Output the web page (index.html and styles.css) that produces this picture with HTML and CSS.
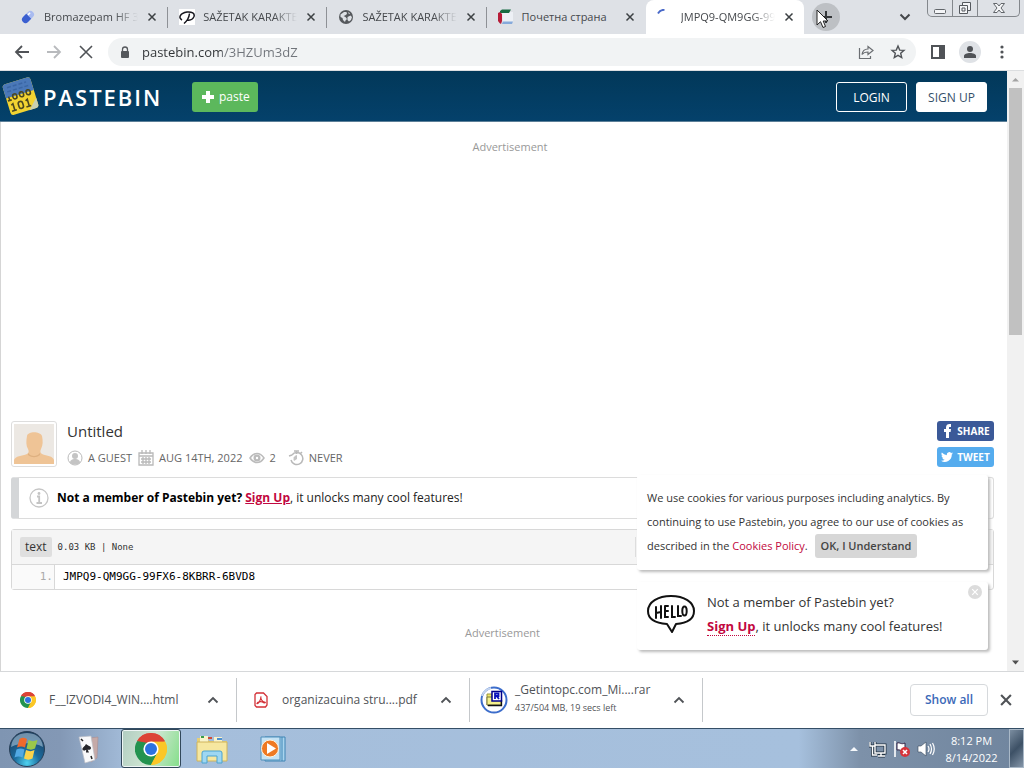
FILE: index.html
```html
<!DOCTYPE html>
<html lang="en">
<head>
<meta charset="utf-8">
<title>JMPQ9-QM9GG - Pastebin.com</title>
<link rel="stylesheet" href="styles.css">
</head>
<body>
<svg class="defs" aria-hidden="true">
  <defs>
    <symbol id="x" viewBox="0 0 10 10"><path d="M1.5 1.5l7 7M8.500 1.5l-7 7" stroke="currentColor" stroke-width="1.500" fill="none"/></symbol>
    <symbol id="up" viewBox="0 0 12 12"><path d="M1.500 8.500L6 4l4.500 4.500" stroke="currentColor" stroke-width="1.800" fill="none"/></symbol>
    <symbol id="chrome" viewBox="0 0 32 32">
      <path d="M16 16L2.140 8A16 16 0 0 1 29.860 8z" fill="#dc4437"/>
      <path d="M16 16L29.860 8A16 16 0 0 1 16 32z" fill="#fbc726"/>
      <path d="M16 16L16 32A16 16 0 0 1 2.140 8z" fill="#23934f"/>
      <path d="M16 8.500h13.860L22.500 19.500z" fill="#fbc726"/>
      <path d="M2.140 8l7.500 12 3-10z" fill="#23934f"/>
      <path d="M22.500 19.800L16 32l-4-9z" fill="#23934f"/>
      <path d="M29.860 8.500H16V16l6.500 3.800L16 32A16 16 0 0 0 29.860 8.500z" fill="#fbc726"/>
      <path d="M2.140 8A16 16 0 0 1 29.860 8.500H16z" fill="#dc4437"/>
      <circle cx="16" cy="16" r="7.600" fill="#fff"/><circle cx="16" cy="16" r="6" fill="#2c72e0"/>
    </symbol>
  </defs>
</svg>

<header class="tabstrip">
  <div class="tabs">
    <div class="tab">
      <svg class="fav" viewBox="0 0 16 16"><g transform="rotate(-45 8 8)"><rect x="1" y="4.500" width="14" height="7" rx="3.500" fill="#a9bbf0"/><path d="M4.500 4.500H9v7H4.500a3.500 3.500 0 0 1 0-7z" fill="#3b5fd0"/><path d="M9.500 6.500h3" stroke="#fff" stroke-width="1.500"/></g></svg>
      <button class="tab-title">Bromazepam HF 3 mg</button>
      <button class="close" aria-label="Close tab"><svg><use href="#x"/></svg></button>
    </div>
    <div class="tab">
      <svg class="fav" viewBox="0 0 16 16"><path fill="#fff" d="M0 0h16v16H0z"/><path d="M3 11C-1 9 1 4 8 3c5-.5 8 1.500 7 4.500C14 10 11 11.500 8 11M10.500 4.500C10 9 8 12 5 14.500" fill="none" stroke="#15151d" stroke-width="1.500"/></svg>
      <button class="tab-title">SAŽETAK KARAKTERISTIKA</button>
      <button class="close" aria-label="Close tab"><svg><use href="#x"/></svg></button>
    </div>
    <div class="tab">
      <svg class="fav" viewBox="0 0 16 16"><circle cx="8" cy="8" r="7" fill="#55585c"/><path d="M2.500 5.500L6 3h2.500l.5 2-2 1.500-1.500.5 2 1 1.500 2-1.500 1.500L7 13l-2-2-.5-2-2-1zM9.500 8l3-1.500L14 8l-1 3-2 1.500L9.500 11zM10 3l2 1.200-1 1z" fill="#dee1e6"/></svg>
      <button class="tab-title">SAŽETAK KARAKTERISTIKA</button>
      <button class="close" aria-label="Close tab"><svg><use href="#x"/></svg></button>
    </div>
    <div class="tab">
      <svg class="fav" viewBox="0 0 16 16"><path d="M4 3h11v10H5z" fill="#edf0f5"/><path d="M2 4V2l2-1.500h9L11 4z" fill="#176b42"/><path d="M0 4l2-1 2 2v7l-1 3-1.500-1L0 12z" fill="#b61c38"/><path d="M5 12.500h10L14 15H4z" fill="#86aadb"/></svg>
      <button class="tab-title">Почетна страна</button>
      <button class="close" aria-label="Close tab"><svg><use href="#x"/></svg></button>
    </div>
    <div class="tab active">
      <svg class="fav" viewBox="0 0 16 16"><path d="M1 4.500C2.500 2 4.500.8 7.500.8" fill="none" stroke="#4868c8" stroke-width="2"/></svg>
      <button class="tab-title">JMPQ9-QM9GG-99FX6</button>
      <button class="close" aria-label="Close tab"><svg><use href="#x"/></svg></button>
    </div>
  </div>
  <button class="newtab" aria-label="New tab">
    <svg viewBox="0 0 28 28"><path d="M14 8v12M8 14h12" stroke="#333639" stroke-width="2"/></svg>
    <svg class="cursor" viewBox="0 0 13 20"><path d="M1 1v15l3.500-3.300L7 18.500l2.500-1L7.200 12H12z" fill="#fff" stroke="#222" stroke-width="1"/></svg>
  </button>
  <button class="tabsearch" aria-label="Search tabs"><svg viewBox="0 0 12 12"><path d="M1.500 3.500L6 8l4.500-4.500" stroke="#44474a" stroke-width="2" fill="none"/></svg></button>
  <div class="winctl">
    <button aria-label="Minimize"><svg viewBox="0 0 14 14"><rect x="1.500" y="8.500" width="11" height="4" rx="1" fill="#f4f5f7" stroke="#62666b"/></svg></button>
    <button aria-label="Restore"><svg viewBox="0 0 14 14"><g fill="#f4f5f7" stroke="#55595e"><path d="M4.500 1.500h8v8h-8z"/><path d="M1.500 4.500h8v8h-8z"/><path d="M4 7h3v3H4z"/></g></svg></button>
    <button class="wide" aria-label="Close"><svg viewBox="0 0 14 14"><path d="M1.500 2.500h3.500l2 2.500 2-2.500h3.500L9 7l3.500 4.500H9L7 9l-2 2.500H1.500L5 7z" fill="#f4f5f7" stroke="#62666b"/></svg></button>
  </div>
</header>

<nav class="toolbar">
  <button aria-label="Back"><svg viewBox="0 0 16 16"><path d="M15 8H2M8 2L2 8l6 6" fill="none" stroke="#505357" stroke-width="1.800"/></svg></button>
  <button aria-label="Forward"><svg viewBox="0 0 16 16"><path d="M1 8h13M8 2l6 6-6 6" fill="none" stroke="#b8babd" stroke-width="1.800"/></svg></button>
  <button aria-label="Stop"><svg viewBox="0 0 16 16"><path d="M2 2l12 12M14 2L2 14" stroke="#505357" stroke-width="1.600"/></svg></button>
  <div class="omnibox">
    <svg class="lock" viewBox="0 0 10 13"><rect x="1" y="5" width="8" height="7" rx="1" fill="#55585c"/><path d="M2.500 6V3.500a2.500 2.500 0 0 1 5 0V6" fill="none" stroke="#55585c" stroke-width="1.300"/></svg>
    <input class="url" type="text" value="pastebin.com/3HZUm3dZ" aria-label="Address">
    <button aria-label="Share"><svg viewBox="0 0 16 16"><path d="M1.500 4v10.500h11V12M4 10.500c.5-3.500 3-5.500 6-5.500V2.500l5 4-5 4V8c-3 0-4.500.5-6 2.500z" fill="none" stroke="#6b6e72" stroke-width="1.200"/></svg></button>
    <button aria-label="Bookmark"><svg viewBox="0 0 16 16"><path d="M8 2l1.700 4.100 4.300.3-3.300 2.900 1 4.300L8 11.300l-3.700 2.300 1-4.300L2 6.400l4.300-.3z" fill="none" stroke="#505357" stroke-width="1.400"/></svg></button>
  </div>
  <button aria-label="Side panel"><svg viewBox="0 0 16 16"><path d="M2 2h12v12H2z" fill="none" stroke="#505357" stroke-width="2"/><path d="M9 2h5v12H9z" fill="#505357"/></svg></button>
  <button class="profile" aria-label="Profile"><svg viewBox="0 0 16 16"><circle cx="8" cy="5" r="3" fill="#505357"/><path d="M2 14v-2c0-2 3-3 6-3s6 1 6 3v2z" fill="#505357"/></svg></button>
  <button aria-label="Menu"><svg viewBox="0 0 16 16"><g fill="#505357"><circle cx="8" cy="3" r="1.600"/><circle cx="8" cy="8" r="1.600"/><circle cx="8" cy="13" r="1.600"/></g></svg></button>
</nav>

<div class="viewport">
  <main class="page">
    <div class="site-header">
      <a class="logo" href="#">
        <svg viewBox="0 0 38 40"><g transform="rotate(-17 19 20)"><rect x="4" y="4" width="29" height="32" rx="3" fill="#f2d331"/><path d="M4 18V7a3 3 0 0 1 3-3h23a3 3 0 0 1 3 3v11z" fill="#4a78b8"/><path d="M8 8h20M7 12h22" stroke="#3a66a4" stroke-width="1.500" stroke-dasharray="4 2"/><path d="M33 26v7a3 3 0 0 1-3 3h-7z" fill="#c9d0b2"/><g fill="none" stroke="#4b4720" stroke-width="1.600"><path d="M5 21h4M7 17v4"/><rect x="11" y="16" width="4" height="5" rx="2"/><rect x="18" y="16" width="4" height="5" rx="2"/><rect x="25" y="16" width="4" height="5" rx="2"/><path d="M7 26l2-1v7M6 32h5"/><rect x="14" y="25" width="4.500" height="7" rx="2.200"/><path d="M22 26l2-1v7M21 32h5"/></g></g></svg>
        <span>PASTEBIN</span>
      </a>
      <button class="paste"><svg viewBox="0 0 14 14"><path d="M7 1v12M1 7h12" stroke="#fff" stroke-width="4"/></svg>paste</button>
      <a class="btn login" href="#">LOGIN</a>
      <a class="btn signup" href="#">SIGN UP</a>
    </div>
    <div class="content">
      <div class="ad top">Advertisement</div>
      <section class="info">
        <svg class="avatar" viewBox="0 0 40 40"><path fill="#ece8e3" d="M0 0h40v40H0z"/><path d="M0 40v-4c1-4 8-4 13-6 2-1 2-3 1-5-2-3-2-8-1-13 1-5 13-5 15 0 1 5 1 9-1 13-1 2-1 4 1 5 5 2 11 2 12 6v4z" fill="#efc496"/><path d="M14 29c3 4 9 4 12 0v2c-4 3-8 3-12 0z" fill="#deb080"/></svg>
        <div class="meta">
          <h1>Untitled</h1>
          <div class="facts">
            <span><svg viewBox="0 0 16 16"><circle cx="8" cy="8" r="7" fill="none" stroke="#bbb"/><circle cx="8" cy="6" r="3" fill="#c4c4c4"/><path d="M3 13c0-3 2-4 5-4s5 1 5 4c-3 2-7 2-10 0z" fill="#c4c4c4"/></svg>A GUEST</span>
            <span><svg viewBox="0 0 16 16"><path d="M1 3h14v12H1zM1 6h14M3 9h10M3 12h10M5 7v7M8 7v7M11 7v7M4 0v4M8 0v4M12 0v4" fill="none" stroke="#b9b9b9" stroke-width="1.300"/></svg>AUG 14TH, 2022</span>
            <span class="views"><svg viewBox="0 0 16 16"><path d="M1 8c4-6 10-6 14 0-4 6-10 6-14 0z" fill="none" stroke="#bbb" stroke-width="1.500"/><circle cx="8" cy="8" r="3.500" fill="#bbb"/><circle cx="8" cy="8" r="1.200" fill="#fff"/></svg>2</span>
            <span><svg viewBox="0 0 16 16"><path d="M4 5a6 6 0 1 1-1 5M6 1h5M8.500 1v3M12 4l2-2M1 6l3-1" fill="none" stroke="#b9b9b9" stroke-width="1.500"/><path d="M9 9V5a4 4 0 0 0-3 6z" fill="#c4c4c4"/></svg>NEVER</span>
          </div>
        </div>
        <div class="social">
          <a class="share" href="#"><svg viewBox="0 0 12 14"><path d="M5 14V8H3V5h2V3.500C5 1 6.500 0 8.500 0H10v3H9C8 3 8 3.300 8 4v1h2l-.4 3H8v6z" fill="#fff"/></svg>SHARE</a>
          <a class="tweet" href="#"><svg viewBox="0 0 24 24"><path d="M24 4.600a10 10 0 0 1-2.800.8 5 5 0 0 0 2.100-2.700c-1 .6-2 1-3.100 1.200a4.900 4.900 0 0 0-8.400 4.500A14 14 0 0 1 1.700 3.200a4.900 4.900 0 0 0 1.500 6.500 5 5 0 0 1-2.200-.6c0 2.300 1.600 4.400 3.900 4.900a5 5 0 0 1-2.200.1 4.900 4.900 0 0 0 4.600 3.400A9.900 9.900 0 0 1 0 19.500 14 14 0 0 0 21.500 7.100 10 10 0 0 0 24 4.600z" fill="#fff"/></svg>TWEET</a>
        </div>
      </section>
      <div class="notice">
        <svg viewBox="0 0 20 20"><circle cx="10" cy="10" r="9" fill="none" stroke="#c6c6c6" stroke-width="1.300"/><circle cx="10" cy="5.500" r="1.400" fill="#c4c4c4"/><path d="M8 8.500h2.200V15M7.500 15h5.500" stroke="#c4c4c4" stroke-width="1.800" fill="none"/></svg>
        <p><b>Not a member of Pastebin yet? <a href="#">Sign Up</a></b>, it unlocks many cool features!</p>
      </div>
      <section class="code">
        <div class="code-top"><a href="#">text</a><span>0.03 KB | None</span><div class="tools"></div></div>
        <ol><li><span class="num">1.</span><code>JMPQ9-QM9GG-99FX6-8KBRR-6BVD8</code></li></ol>
      </section>
      <div class="ad">Advertisement</div>
    </div>
    <aside class="popups">
      <div class="cookies">We use cookies for various purposes including analytics. By continuing to use Pastebin, you agree to our use of cookies as described in the <a href="#">Cookies Policy</a>. <button>OK, I Understand</button></div>
      <div class="hello">
        <svg class="bubble" viewBox="0 0 48 40"><path d="M20 30C7 29 1 24 1 17 1 8 11 2 24 2s23 6 23 15c0 7-6 12-18 13l-4 8z" fill="#fff" stroke="#111" stroke-width="2" stroke-linejoin="round"/><g fill="none" stroke="#111" stroke-width="2" stroke-linecap="round"><path d="M9 13v11M14 12v12M9 19l5-1M18 12v11h3M18 12h3M18 17h3M25 12v11h3M31 12v10h3"/><ellipse cx="37.500" cy="17" rx="2.200" ry="4.500"/></g></svg>
        <p>Not a member of Pastebin yet?<br><a href="#">Sign Up</a>, it unlocks many cool features!</p>
        <button class="dismiss" aria-label="Dismiss"><svg><use href="#x"/></svg></button>
      </div>
    </aside>
  </main>
  <div class="scrollbar">
    <svg viewBox="0 0 17 17"><path d="M5 10.500L8.500 7l3.500 3.500z" fill="#a3a3a3"/></svg>
    <div class="thumb"></div>
    <svg viewBox="0 0 17 17"><path d="M5 6.500l3.500 4 3.500-4z" fill="#505050"/></svg>
  </div>
</div>

<section class="downloads">
  <div class="dl"><svg class="i16"><use href="#chrome"/></svg><span class="name">F__IZVODI4_WIN....html</span><button aria-label="Options"><svg><use href="#up"/></svg></button></div>
  <div class="dl"><svg class="i16" viewBox="0 0 16 16"><path d="M3.500 1h7L14 4.500V13l-1.500 2h-9L2 13.500v-11z" fill="#fff" stroke="#d33037" stroke-width="1.300"/><path d="M8 4.500c-1 2 1.500 5.500 3.500 5.500 2 .5 0 1.500-2 0-2-1-5 0-5.500 1.500 1 1 4-3.500 4-7z" fill="none" stroke="#d33037" stroke-width="1.200"/></svg><span class="name">organizacuina stru....pdf</span><button aria-label="Options"><svg><use href="#up"/></svg></button></div>
  <div class="dl rar"><svg class="i28" viewBox="0 0 28 28"><circle cx="14" cy="14" r="12.500" fill="#fff" stroke="#3c6dcb" stroke-width="2"/><path d="M2 10a12.500 12.500 0 0 1 9-8" fill="none" stroke="#c5d5ef" stroke-width="2"/><path d="M7 8h5v11H7z" fill="#f1e96b" stroke="#99953c"/><path d="M7 11h14v8H7z" fill="#f5f08b" stroke="#77743c"/><path d="M8 19.500h13.500V14" fill="none" stroke="#111" stroke-width="1.300"/><path d="M12 5.500h9.500V15H12z" fill="#fff" stroke="#00008a" stroke-width="1.500"/><path d="M15 13V7.500h3.500V10H15M16.500 10l2.500 3" fill="none" stroke="#0a12bb" stroke-width="1.800"/></svg><span class="name">_Getintopc.com_Mi....rar<small>437/504 MB, 19 secs left</small></span><button aria-label="Options"><svg><use href="#up"/></svg></button></div>
  <button class="showall">Show all</button>
  <button class="dlclose" aria-label="Close downloads"><svg><use href="#x"/></svg></button>
</section>

<footer class="taskbar">
  <button class="start" aria-label="Start"><svg viewBox="0 0 40 40"><defs><radialGradient id="orb" cx=".5" cy=".9" r=".9"><stop offset="0" stop-color="#4ed2f0"/><stop offset=".4" stop-color="#1c6c9e"/><stop offset="1" stop-color="#1c3c5e"/></radialGradient></defs><circle cx="20" cy="20" r="17.500" fill="url(#orb)" stroke="#283f57"/><path d="M4 18C5 7 13 4 20 4s15 3 16 14c-9-5-22-5-32 0z" fill="#c5dded" opacity=".5"/><path d="M12.500 10c3-2 5-1.500 7.500 0l-2 8.500c-3-1.500-5-1.500-8 0z" fill="#ee6a2d"/><path d="M21.500 11c3 1.500 5.500 1.500 9 0l-2.500 8.500c-3 1.500-5 1.500-8.500 0z" fill="#9ac84a"/><path d="M9.500 20.500c3-1.500 5-1.500 8 0l-2 8c-3-1.500-5-1.500-8 0z" fill="#52a9e4"/><path d="M19 21c3 1.500 5.500 1.500 8.500 0l-2 8.500c-3 1.500-5.500 1.500-8.500 0z" fill="#fbd34b"/></svg></button>
  <button class="task" aria-label="Solitaire"><svg viewBox="0 0 32 32"><path d="M16 5l8-1-1 21-6 4z" fill="#c5aaa8" stroke="#a98f92" stroke-width=".6"/><path d="M5 4l12-1 4 24-10 3z" fill="#f9f9fa" stroke="#bcbfc7" stroke-width=".7"/><path d="M12 11c-1 2.500-4 3.500-3.500 5.500.5 1.700 2.500 1.300 3.700.3L12 19.500h3l-1.400-3c1.500.8 3.400.2 3.400-1.500 0-2-3.500-2.300-5-4z" fill="#252529"/><path d="M7 6l2 2M17 23l1 3" stroke="#222" stroke-width="1.500"/></svg></button>
  <button class="task on" aria-label="Chrome"><svg><use href="#chrome"/></svg></button>
  <button class="task" aria-label="Explorer"><svg viewBox="0 0 32 32"><path d="M1 5h10l2 3h18v20H1z" fill="#e5cf78"/><path d="M4 3h8v6H4zM18 4h8v6h-8z" fill="#f9f3cb"/><path d="M5 3h3v2H5z" fill="#3a9c4c"/><path d="M12 4h4v2h-4z" fill="#cf4b37"/><path d="M21 5h5v2h-5z" fill="#4e91cf"/><path d="M1 9h30v19H1z" fill="#f6e7a0" stroke="#cfb45c"/><path d="M6 30V20q0-2 2-2h16q2 0 2 2v10h-5v-7H11v7z" fill="#9ed7f2" stroke="#4aa3d0"/></svg></button>
  <button class="task" aria-label="Media Player"><svg viewBox="0 0 32 32"><path d="M8 4h20v24H8z" fill="#a9d4ee" stroke="#3f84b4"/><path d="M25 4v24" stroke="#3f84b4"/><path d="M4 4h19v23H4z" fill="#c5e3f5" stroke="#4f8fbb"/><circle cx="13" cy="15.500" r="8.500" fill="#ee7a24" stroke="#fff3df"/><path d="M10 10l9 5.500-9 5.500z" fill="#fff"/></svg></button>
  <div class="tray">
    <svg viewBox="0 0 18 18"><path d="M5 11l4-4 4 4z" fill="#f5f8fb"/></svg>
    <svg viewBox="0 0 18 18"><path d="M6 5h10v8H6zM9 16h7M12 13v3M1 2v4h5V2M3.500 6v9H8" fill="none" stroke="#203140" stroke-width="3"/><path d="M6 5h10v8H6zM9 16h7M12 13v3M1 2v4h5V2M3.500 6v9H8" fill="none" stroke="#fff" stroke-width="1.400"/></svg>
    <svg viewBox="0 0 18 18"><path d="M2 1v16" stroke="#fff" stroke-width="1.600"/><path d="M4 3c3-1 4 2 8 0v7c-4 2-5-1-8 0z" fill="#fff" stroke="#324"/><circle cx="12" cy="12" r="5" fill="#d6333a"/><path d="M10 10l4 4M14 10l-4 4" stroke="#fff" stroke-width="1.600"/></svg>
    <svg viewBox="0 0 18 18"><path d="M1 6h3l5-4v14l-5-4H1z" fill="#fff" stroke="#38485a" stroke-width=".6"/><path d="M11 6q2 3 0 6M13 4q3 5 0 10M15.500 3q3.500 6 0 12" fill="none" stroke="#fff" stroke-width="1.200"/></svg>
  </div>
  <div class="clock">8:12 PM<br>8/14/2022</div>
  <button class="peek" aria-label="Show desktop"></button>
</footer>
</body>
</html>
```
FILE: styles.css
```css
* { box-sizing: border-box; }
body {
  margin: 0;
  height: 100vh;
  display: flex;
  flex-direction: column;
  overflow: hidden;
  background: #fff;
  color: #333;
  font: 12px/16px "Open Sans", "Noto Sans", sans-serif;
}
button {
  font: inherit;
  color: inherit;
  border: 0;
  background: none;
  padding: 0;
  display: flex;
  align-items: center;
  justify-content: center;
}
svg { display: block; flex: none; }
a { color: inherit; text-decoration: none; }
p, h1, ol { margin: 0; padding: 0; }
.defs { position: absolute; width: 0; height: 0; }

/* Tab strip */
.tabstrip { flex: none; height: 34px; display: flex; background: #dee1e6; padding-left: 9px; }
.tabs { display: flex; flex: 0 1 795px; min-width: 0; }
.tab {
  flex: 1 1 0;
  min-width: 0;
  display: flex;
  align-items: center;
  gap: 8px;
  padding: 0 9px 0 11px;
  border-right: 1px solid #8e9196;
  border-image: linear-gradient(transparent 8px, #8e9196 8px 27px, transparent 27px) 1;
  color: #45484c;
  font-size: 11px;
}
.tab:nth-child(4) { border-color: transparent; border-image: none; }
.tab.active { background: #fff; border: 0; border-image: none; border-radius: 8px 8px 0 0; }
.fav { width: 16px; height: 16px; }
.tab-title {
  flex: 1;
  min-width: 0;
  overflow: hidden;
  white-space: nowrap;
  justify-content: flex-start;
  -webkit-mask-image: linear-gradient(90deg, #000 75%, transparent);
  mask-image: linear-gradient(90deg, #000 75%, transparent);
}
.tab:nth-child(4) .tab-title { -webkit-mask-image: none; mask-image: none; }
.close svg { width: 10px; height: 10px; }
.close { width: 12px; height: 16px; color: #3c4043; }
.newtab { position: relative; width: 28px; height: 28px; margin: 3px 0 0 8px; border-radius: 50%; background: #bdc0c4; }
.newtab svg { width: 28px; height: 28px; }
.newtab .cursor { position: absolute; left: 4px; top: 6px; width: 13px; height: 20px; }
.tabsearch { margin-left: auto; width: 28px; }
.tabsearch svg { width: 12px; height: 12px; }
.winctl { display: flex; height: 17px; margin: 0 4px 0 8px; border: 1px solid #83878c; border-top: 0; border-radius: 0 0 5px 5px; }
.winctl button { width: 25px; border-right: 1px solid #83878c; }
.winctl .wide { width: 41px; border: 0; }
.winctl svg { width: 14px; height: 14px; }

/* Toolbar */
.toolbar { flex: none; height: 37px; display: flex; align-items: center; gap: 4px; padding: 0 8px; border-bottom: 1px solid #dcdee0; }
.toolbar button { width: 28px; height: 28px; }
.toolbar button svg { width: 16px; height: 16px; }
.omnibox { flex: 1; height: 28px; display: flex; align-items: center; gap: 4px; margin: 0 4px; padding: 0 4px 0 12px; background: #f1f3f4; border-radius: 14px; }
.lock { width: 10px; height: 13px; }
.url {
  flex: 1;
  min-width: 0;
  margin-left: 4px;
  padding: 0 0 0 4px;
  border: 0;
  font: 13px/20px "Open Sans", sans-serif;
  color: transparent;
  background: linear-gradient(90deg, #303336 84px, #70747a 84px);
  -webkit-background-clip: text;
  background-clip: text;
}
.toolbar .profile { width: 22px; height: 22px; margin: 0 3px; border-radius: 50%; background: #dfe2e6; }

/* Viewport */
.viewport { flex: 1; min-height: 0; display: flex; }
.page { position: relative; flex: 1; min-width: 0; overflow: hidden; display: flex; flex-direction: column; }
.site-header { flex: none; height: 51px; display: flex; align-items: center; padding: 2px 20px 0 2px; background: linear-gradient(#023859, #04416b); border-bottom: 1px solid #5c7f98; }
.logo { display: flex; align-items: center; gap: 3px; color: #fff; font-size: 22px; line-height: 28px; font-weight: 600; letter-spacing: 2px; }
.logo svg { width: 38px; height: 40px; margin-top: -3px; }
.paste { width: 66px; height: 30px; margin-left: 30px; gap: 4px; background: #5cb85c; border-radius: 3px; color: #fff; }
.paste svg { width: 14px; height: 14px; }
.btn { height: 30px; width: 71px; border: 1px solid #fff; border-radius: 3px; font-size: 12px; line-height: 30px; text-align: center; }
.login { margin-left: auto; color: #fff; }
.signup { margin-left: 9px; background: #fff; color: #35506a; }
.content { flex: 1; border-left: 1px solid #d5d5d5; padding: 17px 13px 0 10px; }
.ad { text-align: center; color: #999; margin-top: 35px; font-size: 11px; }
.ad.top { height: 282px; margin: 0; padding-left: 15px; }
.info { display: flex; gap: 10px; height: 46px; }
.avatar { width: 46px; height: 46px; padding: 2px; border: 1px solid #ddd; border-radius: 3px; }
.meta { flex: 1; }
h1 { font-size: 15px; line-height: 20px; font-weight: 400; }
.facts { display: flex; gap: 6px; margin-top: 9px; font-size: 11px; color: #666; }
.facts span { display: flex; gap: 5px; align-items: center; }
.facts svg { width: 16px; height: 16px; }
.facts .views { margin-right: 6px; }
.social { display: flex; flex-direction: column; gap: 6px; }
.social a { display: flex; align-items: center; justify-content: center; gap: 4px; width: 57px; height: 20px; border-radius: 3px; color: #fff; font-size: 10px; font-weight: 700; }
.social svg { width: 12px; height: 14px; }
.share { background: #3b5998; }
.tweet { background: #55acee; }
.notice { display: flex; align-items: center; gap: 8px; height: 42px; margin-top: 10px; padding-left: 10px; border: 1px solid #dcdcdc; border-left: 8px solid #d4d6d8; border-radius: 3px; color: #222; }
.notice svg { width: 20px; height: 20px; }
.notice b { color: #000; }
.notice a { color: #c20840; text-decoration: underline; }
.code { margin-top: 10px; border: 1px solid #d8d8d8; border-radius: 3px; }
.code-top { display: flex; align-items: center; height: 35px; padding-left: 8px; gap: 6px; background: #f5f5f5; border-bottom: 1px solid #d8d8d8; }
.code-top a { height: 20px; padding: 0 5px; line-height: 20px; background: #dfdfdf; color: #333; border-radius: 2px; }
.code-top span { font: 9px/16px "DejaVu Sans Mono", monospace; }
.tools { width: 358px; height: 20px; margin-left: auto; border-left: 1px solid #ddd; }
.code li { display: flex; line-height: 24px; }
.num { width: 43px; border-right: 1px solid #d8d8d8; background: #fafafa; color: #aaa; text-align: right; padding-right: 1px; font: 11px/24px "DejaVu Sans Mono", monospace; }
.code code { padding-left: 8px; color: #000; font: 11px/24px "DejaVu Sans Mono", monospace; }

/* Overlaid popups */
.popups { position: absolute; right: 19px; bottom: 21px; width: 351px; display: flex; flex-direction: column; gap: 12px; }
.cookies, .hello { background: #fff; border-radius: 3px; box-shadow: 2px 2px 3px #bbb; }
.cookies { padding: 11px 10px 12px; font-size: 11px; line-height: 24px; }
.cookies a { color: #c20840; }
.cookies button { display: inline-block; height: 24px; padding: 0 6px; margin-left: 4px; line-height: 24px; background: #d7d7d7; border-radius: 3px; font-weight: 600; color: #444; }
.hello { position: relative; display: flex; gap: 12px; padding: 8px 10px 12px; font-size: 13px; line-height: 24px; }
.bubble { width: 48px; height: 40px; margin-top: 4px; }
.hello a { color: #c20840; font-weight: 700; border-bottom: 1px dotted #c20840; }
.dismiss { position: absolute; right: 6px; top: 3px; width: 14px; height: 14px; border-radius: 50%; background: #dcdcdc; color: #fff; }
.dismiss svg { width: 8px; height: 8px; }
.scrollbar { width: 17px; display: flex; flex-direction: column; align-items: center; background: #f1f1f1; }
.scrollbar svg { width: 17px; height: 17px; }
.thumb { width: 13px; height: 247px; background: #c1c1c1; margin-bottom: auto; }

/* Downloads */
.downloads { flex: none; height: 57px; display: flex; align-items: center; padding-right: 9px; border-top: 1px solid #d6d8da; color: #505357; }
.dl { flex: 0 1 233px; height: 44px; display: flex; align-items: center; border-right: 1px solid #c5c8cb; padding: 0 17px 0 16px; }
.dl:first-child { flex-basis: 237px; padding-left: 20px; }
.dl.rar { padding-left: 10px; }
.i16 { width: 16px; height: 16px; margin-right: 13px; }
.i28 { width: 28px; height: 28px; margin-right: 7px; }
.name { flex: 1; white-space: nowrap; }
.name small { display: block; font-size: 9px; line-height: 20px; }
.dl button svg { width: 12px; height: 12px; }
.showall { width: 78px; height: 32px; margin-left: auto; border: 1px solid #d6d9dc; border-radius: 4px; color: #3b69b8; font-weight: 600; }
.dlclose { width: 18px; margin-left: 9px; color: #505357; }
.dlclose svg { width: 14px; height: 14px; }

/* Taskbar */
.taskbar { flex: none; height: 40px; display: flex; align-items: center; border-top: 1px solid #344e66; background: linear-gradient(90deg, #7f95b2 0, #8398b5 60px, #a5bedb 130px, #a6c0dd 78%, #7d91a9 84%, #70859e); }
.start { width: 54px; height: 39px; }
.start svg { width: 40px; height: 40px; }
.task { width: 60px; height: 39px; margin-left: 1px; }
.task svg { width: 32px; height: 32px; }
.task:nth-child(2) { margin-left: 6px; }
.task.on { border: 1px solid #32485a; border-radius: 3px; box-shadow: inset 0 0 0 1px #eef5f5; background: linear-gradient(110deg, #b1ccc1, #cee6d2 50%, #83df88); }
.tray { display: flex; gap: 6px; margin-left: auto; }
.tray svg { width: 18px; height: 18px; }
.clock { width: 73px; margin-right: 1px; text-align: center; color: #fff; font-size: 11px; line-height: 17px; }
.peek { width: 15px; height: 39px; border: 1px solid #a9b8c7; background: linear-gradient(135deg, #7b8da0, #3d5166 50%, #8495a8); }
```
